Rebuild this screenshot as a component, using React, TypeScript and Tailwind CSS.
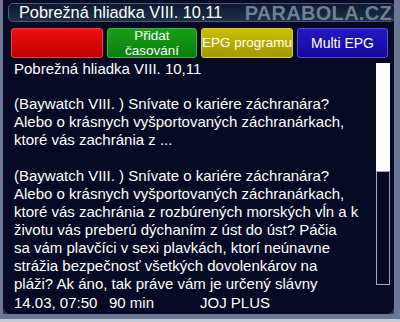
import React from "react";

const lines1 = [
  "(Baywatch VIII. ) Snívate o kariére záchranára?",
  "Alebo o krásnych vyšportovaných záchranárkach,",
  "ktoré vás zachránia z ...",
];
const lines2 = [
  "(Baywatch VIII. ) Snívate o kariére záchranára?",
  "Alebo o krásnych vyšportovaných záchranárkach,",
  "ktoré vás zachránia z rozbúrených morských vĺn a k",
  "životu vás preberú dýchaním z úst do úst? Páčia",
  "sa vám plavčíci v sexi plavkách, ktorí neúnavne",
  "strážia bezpečnosť všetkých dovolenkárov na",
  "pláži? Ak áno, tak práve vám je určený slávny",
];

export default function App() {
  return (
    <div
      className="w-[400px] h-[322px] bg-[#2c3656] overflow-hidden relative"
      style={{ fontFamily: '"Liberation Sans", Arial, sans-serif' }}
    >
      <div className="absolute inset-0 border-l-[3px] border-r-[6px] border-b-[8px] border-[#6a7896] pointer-events-none" />
      <div className="absolute left-0 right-0 bottom-0 h-[3px] bg-[#c8ccd4]" />
      <div className="h-full pl-[3px] pr-[6px] pb-[8px] flex flex-col">
        <div className="h-full bg-[#060a24] rounded-b-[8px] flex flex-col">
          {/* title bar */}
          <div className="mt-[3px] ml-[5px] mr-[-1px] h-[19px] rounded-[5px] border border-[#4a5a78] bg-gradient-to-b from-[#0c1a30] to-[#1e3048] flex items-center justify-between pl-[10px] pr-[2px]">
            <span className="text-white text-[16.3px] leading-none">Pobrežná hliadka VIII. 10,11</span>
            <span className="text-[#7a8a9c] text-[20px] font-bold leading-none tracking-[0.3px] opacity-90">PARABOLA.CZ</span>
          </div>
          {/* buttons */}
          <div className="mt-[6px] ml-[8px] flex gap-[4px] h-[30px]">
            <div className="w-[92px] rounded-[3px] border border-[#e84040] bg-gradient-to-b from-[#f01010] to-[#c00000]" />
            <div className="w-[90px] rounded-[3px] border border-[#40b040] bg-gradient-to-b from-[#18a018] to-[#0a7e0a] flex flex-col items-center justify-center text-white text-[13.5px] leading-[15px]">
              <span>Přidat</span>
              <span>časování</span>
            </div>
            <div className="w-[92px] rounded-[3px] border border-[#d8d040] bg-gradient-to-b from-[#c8c000] to-[#a09a00] flex items-center justify-center text-white text-[13.5px] overflow-hidden whitespace-nowrap">
              EPG programu
            </div>
            <div className="w-[91px] rounded-[3px] border border-[#5050e0] bg-gradient-to-b from-[#2418c0] to-[#1408a0] flex items-center justify-center text-white text-[14px]">
              Multi EPG
            </div>
          </div>
          {/* content */}
          <div className="flex flex-1 mt-[2px]">
            <div className="flex-1 pl-[11px] text-white text-[15px] leading-[18px] whitespace-nowrap">
              <div>Pobrežná hliadka VIII. 10,11</div>
              <div className="h-[17px]" />
              {lines1.map((l) => (
                <div key={"a" + l}>{l}</div>
              ))}
              <div className="h-[18px]" />
              {lines2.map((l) => (
                <div key={"b" + l}>{l}</div>
              ))}
              <div className="flex mt-[1px]">
                <span className="w-[95px]">14.03, 07:50</span>
                <span className="w-[91px]">90 min</span>
                <span>JOJ PLUS</span>
              </div>
            </div>
            <div className="w-[14px] mr-[4px] mt-[3px] flex flex-col h-[222px]">
              <div className="h-[108px] bg-white" />
              <div className="flex-1 border border-[#a0a8b8] bg-[#050820]" />
            </div>
          </div>
        </div>
      </div>
    </div>
  );
}
